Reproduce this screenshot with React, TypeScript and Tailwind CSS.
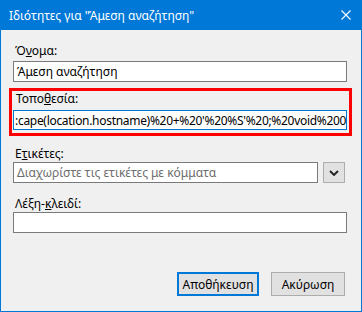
export default function App() {
  const font = "font-['Noto_Sans','Liberation_Sans',sans-serif] text-[12px]";
  return (
    <div className={`w-[362px] h-[312px] flex flex-col bg-[#0078d7] ${font}`}>
      <div className="h-[30px] shrink-0 flex items-center justify-between pl-[9px] pr-[10px] text-white">
        <span className="leading-[15px]">Ιδιότητες για "Άμεση αναζήτηση"</span>
        <svg width="10" height="10" viewBox="0 0 10 10" className="mr-px">
          <path d="M0.5 0.5 L9.5 9.5 M9.5 0.5 L0.5 9.5" stroke="#fff" strokeWidth="1.1" />
        </svg>
      </div>

      <div className="flex-1 mx-px mb-px bg-[#f0f0f0] pl-[12px] pr-[16px] flex flex-col text-black">
        <label className="mt-[13px] leading-[15px] pl-[2px]">
          Ό<u>ν</u>ομα:
        </label>
        <div className="mt-[3px] h-[21px] w-[334px] border border-[#7a7a7a] bg-white px-[3px] flex items-center leading-[15px]">
          Άμεση αναζήτηση
        </div>

        <div className="mt-[6px] -ml-[4px] w-[343px] h-[48px] border-[3px] border-[#ff0000] pl-px">
          <div className="leading-[15px] pl-[3px]">
            Τοπο<u>θ</u>εσία:
          </div>
          <div className="mt-[4px] h-[20px] w-[334px] border border-[#0078d7] bg-white flex items-center overflow-hidden pl-px">
            <span className="whitespace-nowrap leading-[15px] tracking-[-0.3px]">
              :cape(location.hostname)%20+%20'%20%S'%20;%20void%200
            </span>
          </div>
        </div>

        <label className="mt-[10px] leading-[15px] pl-[2px]">
          Ε<u>τ</u>ικέτες:
        </label>
        <div className="mt-px flex items-center gap-[5px]">
          <div className="h-[21px] w-[306px] border border-[#7a7a7a] bg-white px-[3px] flex items-center leading-[15px] text-[#6d6d6d]">
            Διαχωρίστε τις ετικέτες με κόμματα
          </div>
          <div className="h-[21px] w-[22px] border border-[#adadad] bg-[#e1e1e1] flex items-center justify-center">
            <svg width="10" height="6" viewBox="0 0 10 6">
              <path d="M1 1 L5 5 L9 1" fill="none" stroke="#1e1e1e" strokeWidth="1.8" />
            </svg>
          </div>
        </div>

        <label className="mt-[13px] leading-[15px] pl-[2px]">
          Λέξη-<u>κ</u>λειδί:
        </label>
        <div className="mt-px h-[21px] w-[334px] border border-[#7a7a7a] bg-white" />

        <div className="mt-[39px] flex justify-end gap-[12px]">
          <button className="h-[24px] w-[82px] border-2 border-[#0078d7] bg-[#e1e1e1] leading-[15px]">
            Αποθήκευση
          </button>
          <button className="h-[24px] w-[74px] border border-[#adadad] bg-[#e1e1e1] leading-[15px]">
            Ακύρωση
          </button>
        </div>
      </div>
    </div>
  );
}
